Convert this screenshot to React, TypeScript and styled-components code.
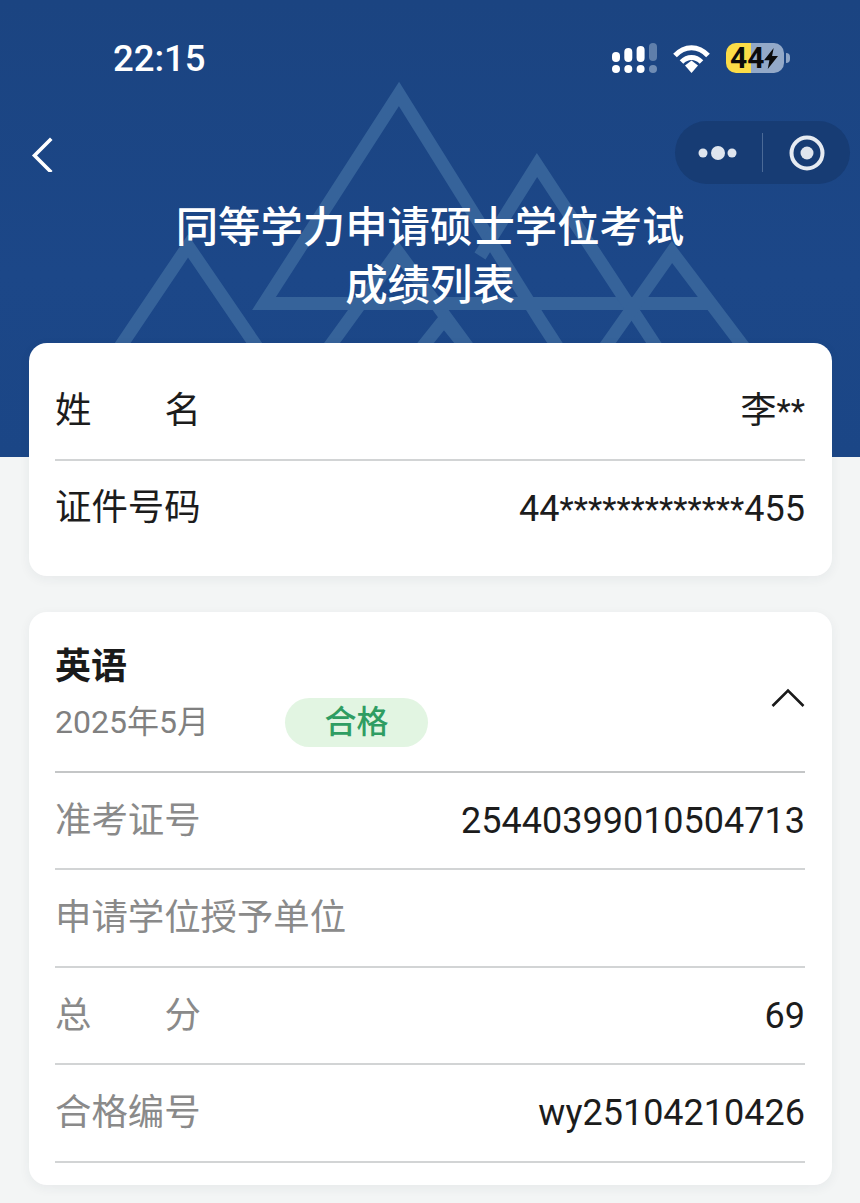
import React from "react";
import styled, { createGlobalStyle } from "styled-components";

const Global = createGlobalStyle`
  html, body { margin: 0; padding: 0; background: #f3f5f5; }
  body { font-family: Roboto, "Noto Sans CJK SC", sans-serif; }
  * { box-sizing: border-box; }
`;

const Page = styled.div`
  width: 860px;
  height: 1203px;
  overflow: hidden;
  background: #f3f5f5;
`;

const Hero = styled.header`
  position: relative;
  height: 457px;
  overflow: hidden;
  background: linear-gradient(180deg, #1b4481 0%, #1c4788 60%, #1b4686 100%);
  color: #fff;
`;

const Mountains = styled.svg`
  position: absolute;
  inset: 0;
`;

const StatusBar = styled.div`
  position: relative;
  height: 118px;
  display: flex;
  align-items: center;
  justify-content: space-between;
  padding: 0 76px 0 113px;
`;

const Clock = styled.span`
  font-size: 36.5px;
  font-weight: 500;
  line-height: 1;
`;

const StatusIcons = styled.div`
  display: flex;
  align-items: center;
  gap: 15px;
  margin-bottom: 2px;
`;

const Battery = styled.div`
  position: relative;
  width: 58px;
  height: 30px;
  border-radius: 10px;
  background: linear-gradient(90deg, #fbdc47 0 43%, #93a9c8 43% 100%);
  display: flex;
  align-items: center;
  padding-left: 4px;
  color: #0c0c0c;
  font-size: 30px;
  font-weight: 700;
  line-height: 1;
  &::after {
    content: "";
    position: absolute;
    right: -6px;
    top: 10px;
    width: 4px;
    height: 10px;
    border-radius: 0 5px 5px 0;
    background: #8fa6c7;
  }
`;

const NavBar = styled.div`
  position: relative;
  height: 63px;
  margin-top: 3px;
  display: flex;
  align-items: center;
  justify-content: space-between;
  padding: 0 10px 0 31px;
`;

const Capsule = styled.div`
  width: 175px;
  height: 63px;
  border-radius: 32px;
  background: #173c74;
  display: flex;
  align-items: center;
`;

const CapsulePart = styled.div`
  flex: 1;
  height: 39px;
  display: flex;
  align-items: center;
  justify-content: center;
  & + & {
    border-left: 1px solid #4b6a97;
  }
`;

const Title = styled.h1`
  position: relative;
  margin: 15px 0 0;
  text-align: center;
  font-size: 42.4px;
  line-height: 58px;
  font-weight: 500;
  color: #fff;
`;

const Stack = styled.main`
  position: relative;
  margin-top: -114px;
  padding: 0 28px 0 29px;
  display: flex;
  flex-direction: column;
  gap: 36px;
`;

const Card = styled.section`
  background: #fff;
  border-radius: 18px;
  padding: 0 27px 0 26px;
  box-shadow: 0 3px 12px rgba(40, 50, 60, 0.06);
`;

const IdCard = styled(Card)`
  height: 233px;
`;

const ScoreCard = styled(Card)`
  height: 573px;
`;

const Row = styled.div<{ $h: number; $pad?: string; $open?: boolean }>`
  height: ${(p) => p.$h}px;
  padding: ${(p) => p.$pad || "1px 0 0"};
  display: flex;
  align-items: center;
  justify-content: space-between;
  border-bottom: ${(p) => (p.$open ? "none" : "2px solid #d2d4d5")};
  font-size: 36px;
  line-height: 1;
`;

const Label = styled.span<{ $muted?: boolean; $spread?: boolean }>`
  width: ${(p) => (p.$spread ? "146px" : "auto")};
  display: flex;
  justify-content: space-between;
  font-size: 36.4px;
  color: ${(p) => (p.$muted ? "#8a8a8a" : "#1c1c1c")};
`;

const Value = styled.span`
  color: #1c1c1c;
`;

const Stars = styled.span`
  font-size: 33px;
`;

const SubjectHead = styled.div`
  height: 161px;
  display: flex;
  align-items: flex-start;
  justify-content: space-between;
  border-bottom: 2px solid #c4c6c7;
  padding-top: 35px;
`;

const SubjectInfo = styled.div`
  display: flex;
  flex-direction: column;
  gap: 11px;
`;

const SubjectName = styled.div`
  font-size: 36px;
  line-height: 40px;
  font-weight: 700;
  color: #1a1a1a;
`;

const SubjectMeta = styled.div`
  display: flex;
  align-items: center;
`;

const DateText = styled.span`
  width: 230px;
  font-size: 32px;
  line-height: 49px;
  color: #808080;
`;

const Badge = styled.span`
  width: 143px;
  height: 49px;
  border-radius: 25px;
  background: #e2f5e2;
  color: #2f9d62;
  font-size: 32px;
  line-height: 49px;
  font-weight: 500;
  text-align: center;
`;

const Toggle = styled.svg`
  margin-top: 41px;
`;

const infoRows = [
  { label: "准考证号", value: "25440399010504713" },
  { label: "申请学位授予单位", value: "" },
  { label: ["总", "分"], value: "69" },
  { label: "合格编号", value: "wy25104210426" },
];

const Signal = () => (
  <svg width="45" height="30" viewBox="0 0 45 30" fill="#fff">
    <rect x="0" y="9" width="8" height="10" rx="4" />
    <rect x="12.3" y="5" width="8" height="14" rx="4" />
    <rect x="24.6" y="3" width="8" height="16" rx="4" />
    <rect x="37" y="0" width="8" height="18" rx="4" fill="#5f7fab" />
    <circle cx="4" cy="26" r="4" />
    <circle cx="16.3" cy="26" r="4" />
    <circle cx="28.6" cy="26" r="4" />
    <circle cx="41" cy="26" r="4" fill="#6f8cb4" />
  </svg>
);

const Wifi = () => (
  <svg width="39" height="30" viewBox="0 0 38 30" fill="none" stroke="#fff" strokeWidth="5">
    <path d="M2.5 12.5 C12 2 26 2 35.5 12.5" />
    <path d="M9 19 C15 13 23 13 29 19" />
    <path d="M12.5 22.5 L19 17.5 L25.5 22.5 L19 30 Z" fill="#fff" stroke="none" />
  </svg>
);

const Bolt = () => (
  <svg width="14" height="21" viewBox="0 0 13 24" fill="#0c0c0c" preserveAspectRatio="none">
    <path d="M9 0 L0 14 H5 L3.5 24 L13 9 H7.5 Z" />
  </svg>
);

export default function App() {
  return (
    <Page>
      <Global />
      <Hero>
        <Mountains width="860" height="457" viewBox="0 0 860 457" fill="none" stroke="#36639a" strokeWidth="13">
          <path d="M712 303.5 H264 L399 94 L540 320 L566 360" />
          <path d="M480 256 L537 165 L665 360" />
          <path d="M118 350 L188 246 L259 350" />
          <path d="M327 350 L398 252 L470 350" />
          <path d="M603 350 L672 252 L746 350" />
          <path d="M420 350 L444 320 L468 350" />
        </Mountains>
        <StatusBar>
          <Clock>22:15</Clock>
          <StatusIcons>
            <Signal />
            <Wifi />
            <Battery>
              44
              <Bolt />
            </Battery>
          </StatusIcons>
        </StatusBar>
        <NavBar>
          <svg width="24" height="38" viewBox="0 0 24 38" fill="none" stroke="#fff" strokeWidth="3.6" strokeLinecap="square">
            <path d="M19 6 L3.5 21.5 L19 37" />
          </svg>
          <Capsule>
            <CapsulePart>
              <svg width="42" height="16" viewBox="0 0 42 16" fill="#dfe5ee">
                <circle cx="5" cy="8" r="4.5" />
                <circle cx="20" cy="8" r="7" />
                <circle cx="34" cy="8" r="4.5" />
              </svg>
            </CapsulePart>
            <CapsulePart>
              <svg width="36" height="36" viewBox="0 0 36 36" fill="none">
                <circle cx="18" cy="18" r="15.5" stroke="#e6ebf2" strokeWidth="4" />
                <circle cx="18" cy="18" r="6.5" fill="#dfe5ee" />
              </svg>
            </CapsulePart>
          </Capsule>
        </NavBar>
        <Title>
          同等学力申请硕士学位考试
          <br />
          成绩列表
        </Title>
      </Hero>
      <Stack>
        <IdCard>
          <Row $h={118} $pad="20px 0 0">
            <Label $spread>
              <span>姓</span>
              <span>名</span>
            </Label>
            <Value>
              李<Stars>**</Stars>
            </Value>
          </Row>
          <Row $h={115} $pad="0 0 20px" $open>
            <Label>证件号码</Label>
            <Value>
              44<Stars>*************</Stars>455
            </Value>
          </Row>
        </IdCard>
        <ScoreCard>
          <SubjectHead>
            <SubjectInfo>
              <SubjectName>英语</SubjectName>
              <SubjectMeta>
                <DateText>2025年5月</DateText>
                <Badge>合格</Badge>
              </SubjectMeta>
            </SubjectInfo>
            <Toggle width="34" height="20" viewBox="0 0 34 20" fill="none" stroke="#1a1a1a" strokeWidth="2.6">
              <path d="M1.5 18 L17 2.5 L32.5 18" />
            </Toggle>
          </SubjectHead>
          {infoRows.map((r) => (
            <Row $h={97.4} key={r.value || "unit"}>
              {Array.isArray(r.label) ? (
                <Label $muted $spread>
                  <span>{r.label[0]}</span>
                  <span>{r.label[1]}</span>
                </Label>
              ) : (
                <Label $muted>{r.label}</Label>
              )}
              <Value>{r.value}</Value>
            </Row>
          ))}
        </ScoreCard>
      </Stack>
    </Page>
  );
}
